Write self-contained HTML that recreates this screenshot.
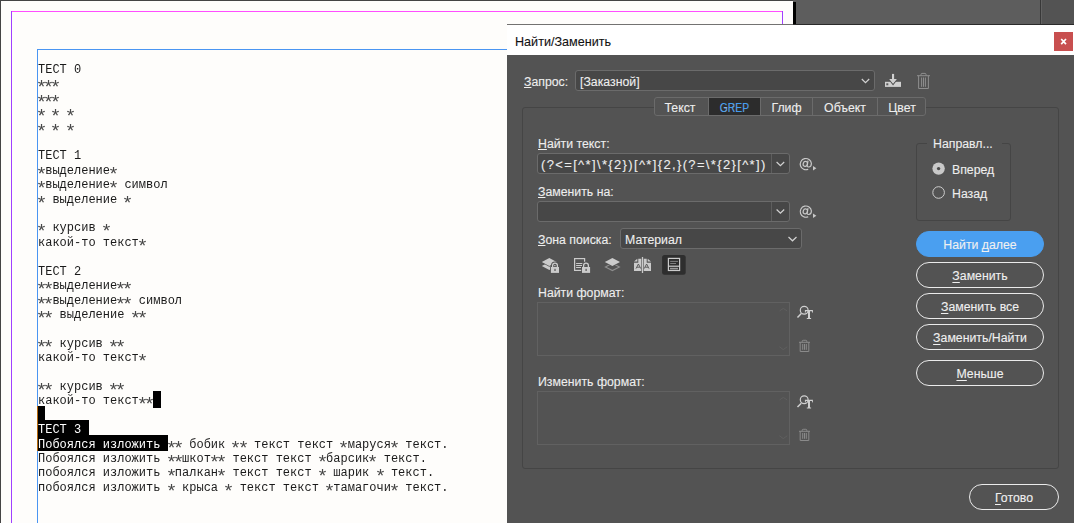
<!DOCTYPE html>
<html><head><meta charset="utf-8">
<style>
*{margin:0;padding:0;box-sizing:border-box}
html,body{width:1074px;height:523px;overflow:hidden;background:#5d5d5d;position:relative;font-family:"Liberation Sans",sans-serif}
.a{position:absolute}
#rp{left:1040px;top:0;width:34px;height:24px;background:#535353;border-left:1px solid #383838;box-shadow:inset 1px 0 0 #626262}
#page{left:0;top:0;width:793px;height:523px;background:#fefdfb;border-left:1px solid #444;border-top:1px solid #444}
#shadow{left:793px;top:2px;width:3px;height:22px;background:#000}
#txt{will-change:transform;left:38px;top:63.2px;font-family:"Liberation Mono",monospace;font-size:12px;line-height:14.4px;color:#1a1a1a;white-space:pre}
.sel{background:#000}
#txt b{font-weight:normal;color:#484848;display:inline-block;transform:translateY(4.2px) scale(1.6)}
#txt i{font-style:normal;color:#fff}
#dlg{left:507px;top:24px;width:567px;height:499px}
#tb{left:0;top:1px;width:567px;height:30px;background:#fff}
.ui{color:#eeeeee;font-size:12.3px;white-space:pre;margin-top:1px;-webkit-text-stroke:0.1px #eeeeee}
.u{text-decoration:underline;text-decoration-thickness:1px;text-underline-offset:1px;text-decoration-skip-ink:none}
.field{background:#474747;border:1px solid #6b6b6b;border-radius:3px}
.tab{text-align:center}
.btn .u{text-underline-offset:2px}
.btn{-webkit-text-stroke:0.1px #f0f0f0;border:1.3px solid #ebebeb;border-radius:13px;color:#f0f0f0;font-size:12.3px;text-align:center;line-height:22px;padding-top:1.5px}
</style></head><body>
<div class="a" id="page"></div>
<div class="a" id="shadow"></div>
<div class="a" id="rp"></div>
<!-- guides -->
<div class="a" style="left:11px;top:11px;width:772px;height:1px;background:#ff4dff"></div>
<div class="a" style="left:11px;top:11px;width:1px;height:512px;background:#a040ff"></div>
<div class="a" style="left:782px;top:11px;width:1px;height:13px;background:#a040ff"></div>
<div class="a" style="left:37px;top:49px;width:470px;height:1px;background:#4a95f2"></div>
<div class="a" style="left:37px;top:49px;width:1px;height:474px;background:#4a95f2"></div>
<!-- selection -->
<div class="a sel" style="left:153px;top:391px;width:8px;height:17px"></div>
<div class="a sel" style="left:38px;top:406px;width:7px;height:15px"></div>
<div class="a sel" style="left:38px;top:420px;width:51px;height:15px"></div>
<div class="a sel" style="left:38px;top:435px;width:130px;height:16px"></div>
<div class="a" style="left:37px;top:406px;width:1px;height:45px;background:#b5690d"></div>
<div class="a" id="txt">ТЕСТ 0
<b>*</b><b>*</b><b>*</b>
<b>*</b><b>*</b><b>*</b>
<b>*</b> <b>*</b> <b>*</b>
<b>*</b> <b>*</b> <b>*</b>

ТЕСТ 1
<b>*</b>выделение<b>*</b>
<b>*</b>выделение<b>*</b> символ
<b>*</b> выделение <b>*</b>

<b>*</b> курсив <b>*</b>
какой-то текст<b>*</b>

ТЕСТ 2
<b>*</b><b>*</b>выделение<b>*</b><b>*</b>
<b>*</b><b>*</b>выделение<b>*</b><b>*</b> символ
<b>*</b><b>*</b> выделение <b>*</b><b>*</b>

<b>*</b><b>*</b> курсив <b>*</b><b>*</b>
какой-то текст<b>*</b>

<b>*</b><b>*</b> курсив <b>*</b><b>*</b>
какой-то текст<b>*</b><b>*</b>

<i>ТЕСТ 3</i>
<i>Побоялся изложить </i><b>*</b><b>*</b> бобик <b>*</b><b>*</b> текст текст <b>*</b>маруся<b>*</b> текст.
Побоялся изложить <b>*</b><b>*</b>шкот<b>*</b><b>*</b> текст текст <b>*</b>барсик<b>*</b> текст.
побоялся изложить <b>*</b>палкан<b>*</b> текст текст <b>*</b> шарик <b>*</b> текст.
побоялся изложить <b>*</b> крыса <b>*</b> текст текст <b>*</b>тамагочи<b>*</b> текст.</div>

<!-- dialog -->
<div class="a" id="dlg">
  <div class="a" style="left:0;top:0;width:567px;height:1px;background:rgba(0,0,0,.55)"></div><div class="a" id="tb"></div><div class="a" style="left:0;top:31px;width:567px;height:468px;background:#535353"></div>
  <div class="a" style="left:8px;top:10.5px;font-size:12.6px;color:#111;-webkit-text-stroke:0.1px #111">Найти/Заменить</div>
  <div class="a" style="left:547px;top:8px;width:19px;height:19px;background:#c84f4f"></div>

  <div class="a ui" style="left:17px;top:50px"><span class="u">З</span>апрос:</div>
  <div class="a field" style="left:68px;top:46px;width:300px;height:21px"></div>
  <div class="a ui" style="left:73px;top:50px">[Заказной]</div>

  <!-- main group -->
  <div class="a" style="left:15px;top:83px;width:537px;height:362px;border:1px solid #454545;border-radius:3px"></div>

  <!-- tabs -->
  <div class="a" style="left:147px;top:73px;width:272px;height:19px;background:#535353;border:1px solid #6b6b6b;border-radius:3px"></div>

  <div class="a" style="left:201px;top:74px;width:52px;height:17px;background:#2c2c2c"></div>
  <div class="a" style="left:201px;top:73px;width:1px;height:19px;background:#6b6b6b"></div>
  <div class="a" style="left:253px;top:73px;width:1px;height:19px;background:#6b6b6b"></div>
  <div class="a" style="left:305px;top:73px;width:1px;height:19px;background:#6b6b6b"></div>
  <div class="a" style="left:370px;top:73px;width:1px;height:19px;background:#6b6b6b"></div>
  <div class="a ui tab" style="left:146.5px;top:76px;width:53px">Текст</div>
  <div class="a ui tab" style="left:202px;top:76px;width:51px;color:#3f9cf2"><span style="display:inline-block;transform:scaleX(0.84)">GREP</span></div>
  <div class="a ui tab" style="left:254px;top:76px;width:51px">Глиф</div>
  <div class="a ui tab" style="left:306px;top:76px;width:64px">Объект</div>
  <div class="a ui tab" style="left:371px;top:76px;width:48px">Цвет</div>

  <div class="a ui" style="left:31px;top:112px"><span class="u">Н</span>айти текст:</div>
  <div class="a field" style="left:30px;top:129px;width:253px;height:21px"></div>
  <div class="a" style="left:264px;top:130px;width:1px;height:19px;background:#5e5e5e"></div>
  <div class="a ui" style="left:34px;top:132px;letter-spacing:1.35px;font-size:13px">(?&lt;=[^*]\*{2})[^*]{2,}(?=\*{2}[^*])</div>

  <div class="a ui" style="left:31px;top:160px"><span class="u">З</span>аменить на:</div>
  <div class="a field" style="left:30px;top:177px;width:253px;height:21px"></div>
  <div class="a" style="left:264px;top:178px;width:1px;height:19px;background:#5e5e5e"></div>

  <div class="a ui" style="left:31px;top:208px"><span class="u">З</span>она поиска:</div>
  <div class="a field" style="left:113px;top:204px;width:182px;height:21px"></div>
  <div class="a ui" style="left:118px;top:208px">Материал</div>

  <div class="a ui" style="left:31px;top:261px">Найти формат:</div>
  <div class="a" style="left:30px;top:278px;width:253px;height:54px;border:1px solid #616161"></div>
  <div class="a ui" style="left:31px;top:350px">Изменить формат:</div>
  <div class="a" style="left:30px;top:367px;width:253px;height:54px;border:1px solid #616161"></div>

      <!-- direction -->
  <div class="a" style="left:409px;top:119px;width:95px;height:78px;border:1px solid #454545;border-radius:3px"></div>
  <div class="a ui" style="left:420px;top:112px;background:#535353;padding:0 9px 0 6px">Направл...</div>
  <div class="a ui" style="left:445px;top:138px">Вперед</div>
  <div class="a ui" style="left:445px;top:162px">Назад</div>

  <div class="a btn" style="left:409px;top:207px;width:128px;height:26px;background:#4a9ff0;border-color:#4a9ff0">Найти <span class="u">д</span>алее</div>
  <div class="a btn" style="left:409px;top:238px;width:128px;height:26px"><span class="u">З</span>аменить</div>
  <div class="a btn" style="left:409px;top:269px;width:128px;height:26px"><span class="u">З</span>аменить все</div>
  <div class="a btn" style="left:409px;top:300px;width:128px;height:26px"><span class="u">З</span>аменить/Найти</div>
  <div class="a btn" style="left:409px;top:336px;width:128px;height:26px"><span class="u">М</span>еньше</div>
  <div class="a btn" style="left:462px;top:460px;width:90px;height:26px"><span class="u">Г</span>отово</div>
</div>

<svg class="a" style="left:0;top:0" width="1074" height="523" viewBox="0 0 1074 523">
 <g fill="none" stroke="#d2d2d2" stroke-width="1.2">
  <polyline points="861.8,79 865.5,82.6 869.2,79"/>
  <polyline points="776.6,162 780.4,165.7 784.2,162"/>
  <polyline points="776.6,209.5 780.4,213.2 784.2,209.5"/>
  <polyline points="788.5,237 792.5,240.8 796.5,237"/>
 </g>
 <path d="M1061.2,39 L1066,44.2 M1066,39 L1061.2,44.2" stroke="#fff" stroke-width="1.7"/>
 <!-- save -->
 <rect x="885" y="81.8" width="16" height="5.1" fill="#d0d0d0"/>
 <rect x="886.3" y="83.3" width="2" height="2" fill="#5a5a5a"/>
 <polygon points="888.8,79 897.3,79 893.05,84.4" fill="#d0d0d0" stroke="#535353" stroke-width="1.3" stroke-linejoin="miter"/>
 <polygon points="889.2,79 896.9,79 893.05,83.8" fill="#d0d0d0"/>
 <rect x="892" y="73.9" width="2.1" height="6" fill="#d0d0d0"/>
 <!-- trash top -->
 <g fill="none" stroke="#8e8e8e" stroke-width="1">
  <line x1="917" y1="75.7" x2="930" y2="75.7"/>
  <path d="M921,75.7 V74.5 Q921,73.4 922,73.4 H925 Q926,73.4 926,74.5 V75.7"/>
  <path d="M918.6,75.7 V88.5 H928.4 V75.7"/>
  <line x1="921.6" y1="77.5" x2="921.6" y2="86.8"/>
  <line x1="923.5" y1="77.5" x2="923.5" y2="86.8"/>
  <line x1="925.4" y1="77.5" x2="925.4" y2="86.8"/>
 </g>
 <!-- scope icons -->
 <g fill="#cbcbcb">
  <polygon points="541.8,266 549.3,262 556.7,266 549.3,270"/>
  <polygon points="541.8,262 549.3,258 556.7,262 549.3,266" stroke="#535353" stroke-width="1.2"/>
  <polygon points="541.8,262 549.3,258 556.7,262 549.3,266"/>
 </g>
 <g>
  <path d="M552.6,267.5 V265.6 A2.4,2.4 0 0 1 557.4,265.6 V267.5" fill="none" stroke="#535353" stroke-width="3.2"/>
  <rect x="550.9" y="267" width="8.1" height="5.9" fill="#535353" stroke="#535353" stroke-width="1.6"/>
  <path d="M552.6,267.5 V265.6 A2.4,2.4 0 0 1 557.4,265.6 V267.5" fill="none" stroke="#cbcbcb" stroke-width="1.3"/>
  <rect x="550.9" y="267" width="8.1" height="5.9" fill="#cbcbcb"/>
  <rect x="554.4" y="268.8" width="1.2" height="2.2" fill="#555"/>
 </g>
 <g>
  <rect x="574.6" y="258.6" width="10" height="11.8" fill="none" stroke="#cbcbcb" stroke-width="1.2"/>
  <g stroke="#cbcbcb" stroke-width="1"><line x1="576.1" y1="263.5" x2="582.8" y2="263.5"/><line x1="576.1" y1="265.5" x2="582" y2="265.5"/><line x1="576.1" y1="267.5" x2="581" y2="267.5"/></g>
  <path d="M583.6,267.5 V265.6 A2.4,2.4 0 0 1 588.4,265.6 V267.5" fill="none" stroke="#535353" stroke-width="3.2"/>
  <rect x="582" y="267" width="8.1" height="5.9" fill="#535353" stroke="#535353" stroke-width="1.6"/>
  <path d="M583.6,267.5 V265.6 A2.4,2.4 0 0 1 588.4,265.6 V267.5" fill="none" stroke="#cbcbcb" stroke-width="1.3"/>
  <rect x="582" y="267" width="8.1" height="5.9" fill="#cbcbcb"/>
  <rect x="585.5" y="268.8" width="1.2" height="2.2" fill="#555"/>
 </g>
 <g>
  <polygon points="605.4,267 612.4,263.2 619.4,267 612.4,270.6" fill="none" stroke="#8e8e8e" stroke-width="1.1"/>
  <polygon points="604.8,262 612.4,258 620,262 612.4,266" fill="#535353" stroke="#535353" stroke-width="1.4"/>
  <polygon points="604.8,262 612.4,258 620,262 612.4,266" fill="#cbcbcb"/>
 </g>
 <g fill="#cbcbcb">
  <path d="M638.3,258.8 H641.3 V271 H634 V262.8 H638.3 Z"/>
  <path d="M643.7,258.8 H651 V262.8 H646.7 Z" fill="none"/>
  <path d="M643.7,258.8 H646.7 V262.8 H651 V271 H643.7 Z"/>
  <polygon points="634,261.6 637.3,258.8 637.3,261.6"/>
  <polygon points="651,261.6 647.7,258.8 647.7,261.6"/>
  <rect x="641.85" y="257" width="1.3" height="16"/>
 </g>
 <g fill="none" stroke="#505050" stroke-width="0.9">
  <path d="M636,268.6 L638.4,264 L640.8,268.6 M637,267.2 H639.8"/>
  <path d="M644.2,268.6 L646.6,264 L649,268.6 M645.2,267.2 H648"/>
 </g>
 <rect x="662.1" y="255.1" width="23.6" height="19.7" rx="2.5" fill="#2e2e2e"/>
 <rect x="668.4" y="258.4" width="11.2" height="12.1" fill="none" stroke="#cbcbcb" stroke-width="1.2"/>
 <rect x="668.4" y="265.6" width="11.2" height="1.2" fill="#cbcbcb"/>
 <g stroke="#8a8a8a" stroke-width="0.9"><line x1="670.2" y1="261.4" x2="678" y2="261.4"/><line x1="670.2" y1="263.5" x2="676" y2="263.5"/></g>
 <rect x="670" y="267.8" width="8" height="1.6" fill="#9a9a9a"/>
 <!-- format icons -->
 <g id="fi1" fill="none" stroke="#d0d0d0">
  <circle cx="804.2" cy="310.2" r="3.9" stroke-width="1.2"/>
  <line x1="801.3" y1="313.6" x2="797.5" y2="317.5" stroke-width="1.5"/>
 </g>
 <g fill="#d0d0d0">
  <path d="M804.9,310.1 H812.9 V312.8 H812.4 L811.8,311.3 H810 V317.9 H811.1 V319 H806.8 V317.9 H808 V311.3 H806 L805.4,312.8 H804.9 Z"/>
 </g>
 <g transform="translate(0,89.6)">
  <circle cx="804.2" cy="310.2" r="3.9" fill="none" stroke="#d0d0d0" stroke-width="1.2"/>
  <line x1="801.3" y1="313.6" x2="797.5" y2="317.5" stroke="#d0d0d0" stroke-width="1.5"/>
  <path fill="#d0d0d0" d="M804.9,310.1 H812.9 V312.8 H812.4 L811.8,311.3 H810 V317.9 H811.1 V319 H806.8 V317.9 H808 V311.3 H806 L805.4,312.8 H804.9 Z"/>
 </g>
 <g id="ft" fill="none" stroke="#8a8a8a" stroke-width="1">
  <line x1="799" y1="342.3" x2="810" y2="342.3"/>
  <path d="M802.2,342.3 V341.3 Q802.2,340.3 803.2,340.3 H805.8 Q806.8,340.3 806.8,341.3 V342.3"/>
  <path d="M800.2,342.3 V351.5 H808.8 V342.3"/>
  <line x1="802.7" y1="344" x2="802.7" y2="349.8"/>
  <line x1="804.5" y1="344" x2="804.5" y2="349.8"/>
  <line x1="806.3" y1="344" x2="806.3" y2="349.8"/>
 </g>
 <use href="#ft" transform="translate(0,89)"/>
 <g fill="none" stroke="#5f5f5f" stroke-width="1">
  <polyline points="779.5,311 783.3,308.4 787.2,311"/>
  <polyline points="779.5,346.8 783.3,349.6 787.2,346.8"/>
  <polyline points="779.5,400 783.3,397.4 787.2,400"/>
  <polyline points="779.5,435.8 783.3,438.6 787.2,435.8"/>
 </g>
 <g id="at" fill="none" stroke="#cacaca" stroke-width="1.15">
  <path d="M808,160.7 L807.2,165.6 Q807,167.1 808.6,167 Q811.4,166.6 811.4,163.4 A5.6,5.6 0 1 0 808.2,169.2"/>
  <ellipse cx="805.3" cy="163.9" rx="2.1" ry="2.5" transform="rotate(20 805.3 163.9)"/>
 </g>
 <use href="#at" transform="translate(0,47.5)"/>
 <!-- @ triangles -->
 <g fill="#c8c8c8">
  <polygon points="813,166 816.4,168.3 813,170.6"/>
  <polygon points="813,213.4 816.4,215.7 813,218"/>
 </g>
 <!-- radios -->
 <circle cx="938.6" cy="168.6" r="6.2" fill="#c9c9c9"/>
 <circle cx="938.6" cy="168.6" r="1.7" fill="#4a4a4a"/>
 <circle cx="938.6" cy="192.5" r="5.8" fill="none" stroke="#cfcfcf" stroke-width="1"/>
</svg>
</body></html>
